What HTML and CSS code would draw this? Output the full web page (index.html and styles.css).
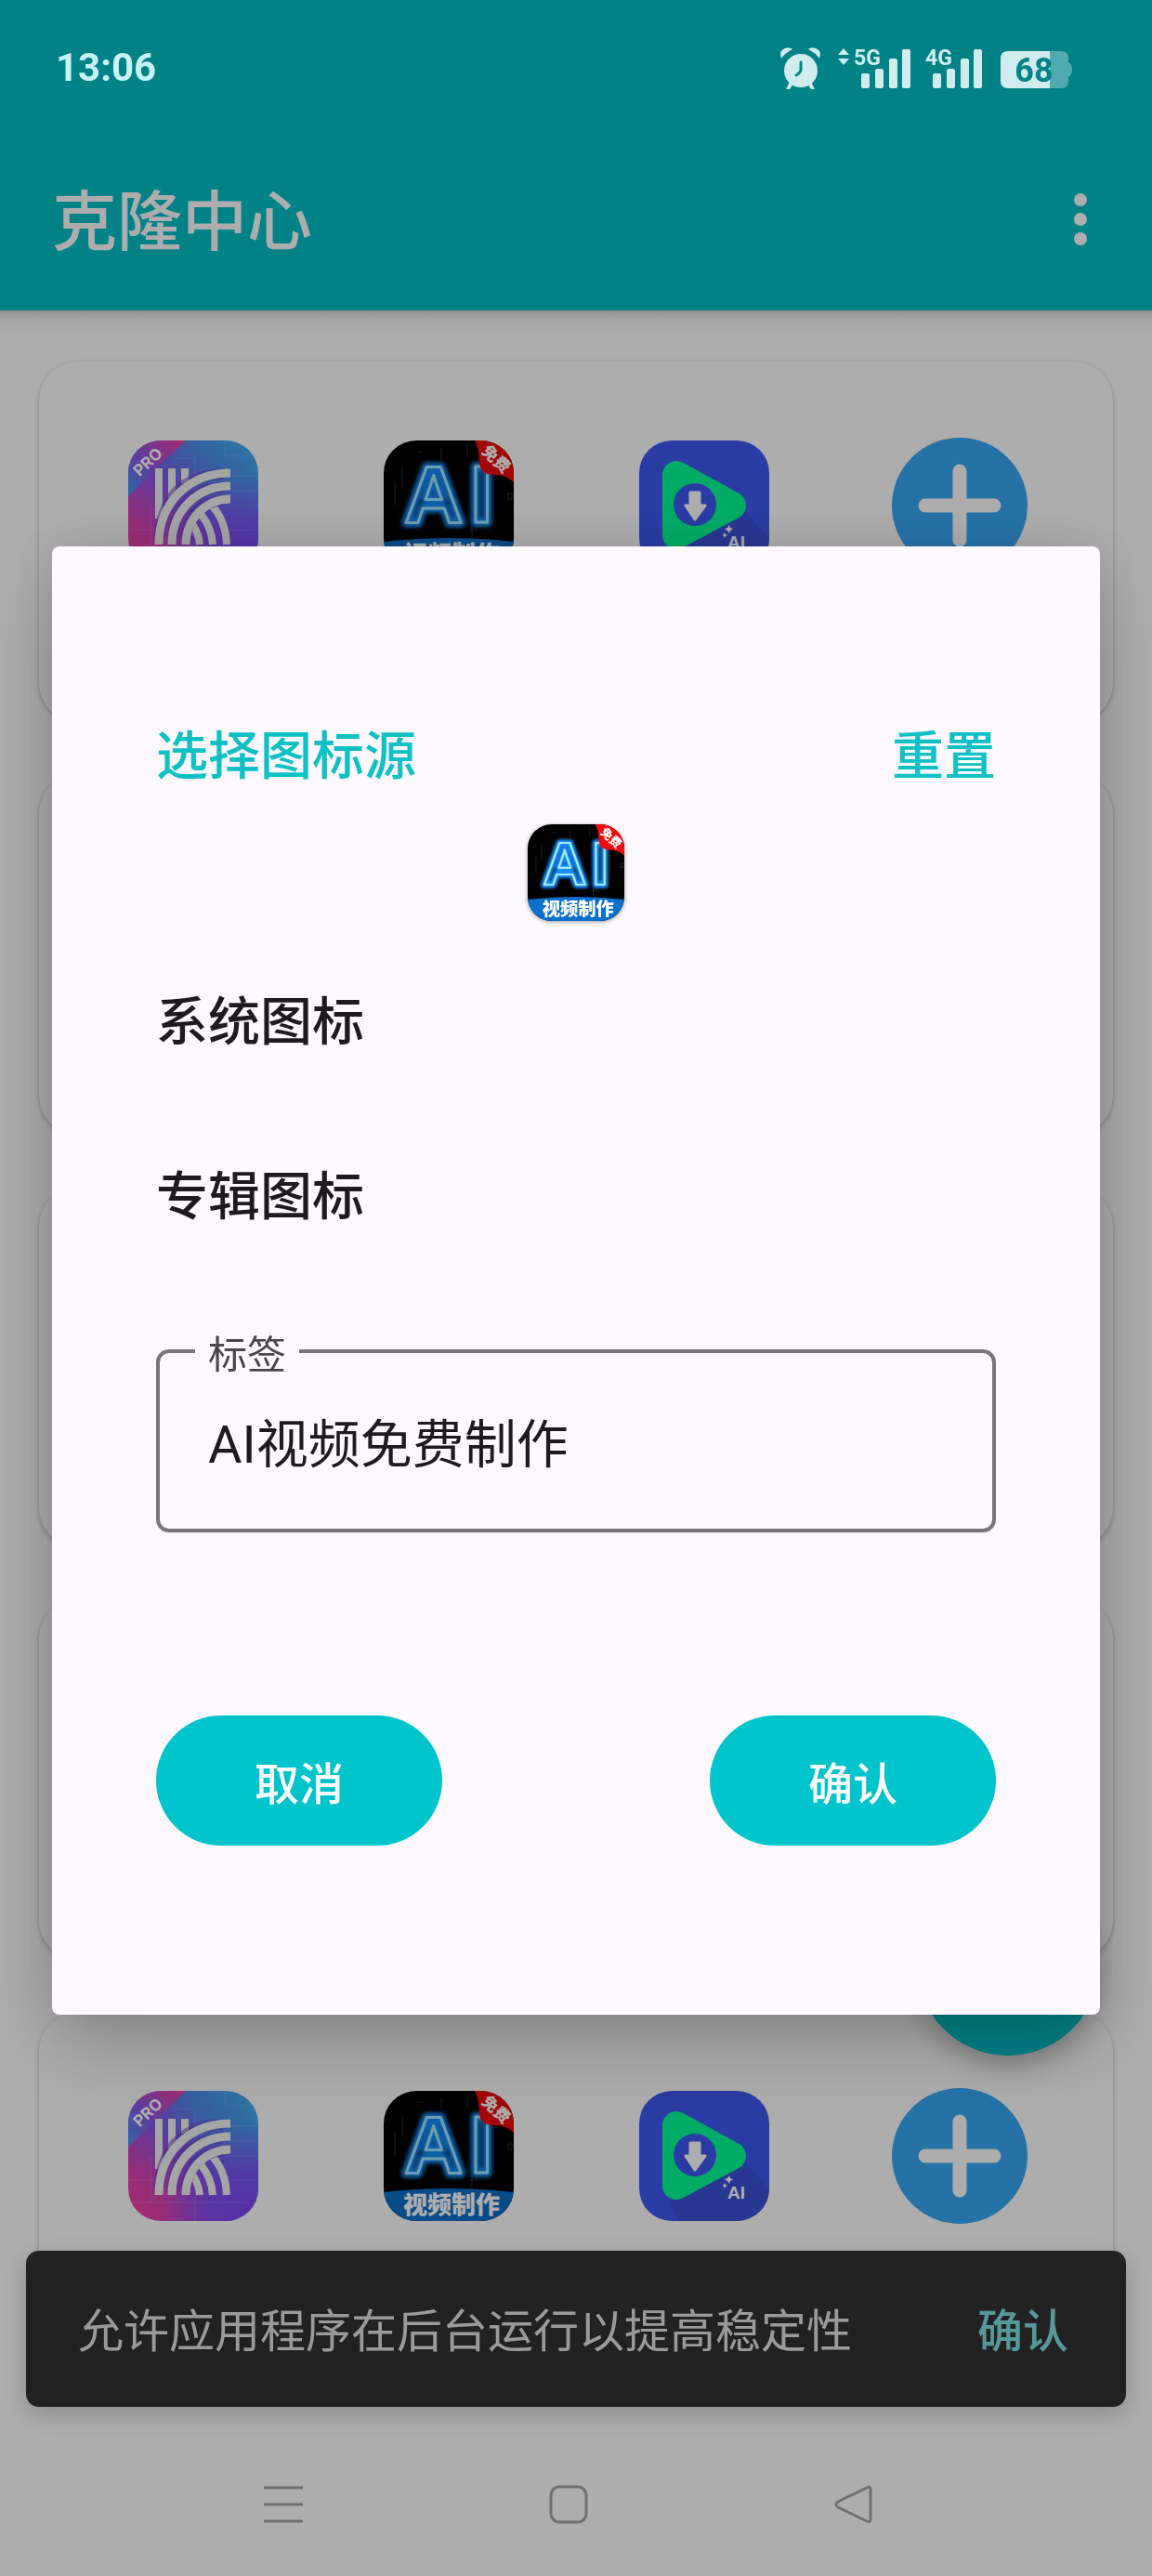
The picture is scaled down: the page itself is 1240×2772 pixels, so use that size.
FILE: index.html
```html
<!DOCTYPE html>
<html lang="zh-CN">
<head>
<meta charset="utf-8">
<meta name="viewport" content="width=device-width, initial-scale=1">
<title>克隆中心</title>
<link rel="stylesheet" href="styles.css">
</head>
<body>
<svg class="sprite" width="0" height="0" aria-hidden="true">
  <defs>
    <linearGradient id="kBase" x1="0" y1="1" x2="1" y2="0">
      <stop offset="0" stop-color="#f83fa0"/>
      <stop offset=".22" stop-color="#d944b4"/>
      <stop offset=".48" stop-color="#8458ec"/>
      <stop offset=".72" stop-color="#4f8cec"/>
      <stop offset="1" stop-color="#3fb6f4"/>
    </linearGradient>
    <radialGradient id="kCorner" cx="1" cy="1" r=".75">
      <stop offset="0" stop-color="#8240fa"/>
      <stop offset=".5" stop-color="#7c4ef6" stop-opacity=".8"/>
      <stop offset="1" stop-color="#7c4ef6" stop-opacity="0"/>
    </radialGradient>
    <linearGradient id="kRibbon" x1="0" y1="1" x2="1" y2="0">
      <stop offset="0" stop-color="#3f9cf8"/>
      <stop offset=".45" stop-color="#8d58e8"/>
      <stop offset="1" stop-color="#f43f9c"/>
    </linearGradient>
    <clipPath id="tile"><rect width="140" height="140" rx="35"/></clipPath>
    <filter id="glow" x="-30%" y="-30%" width="160%" height="160%"><feGaussianBlur stdDeviation="2"/></filter>
    <symbol id="app-k" viewBox="0 0 140 140">
      <g clip-path="url(#tile)">
        <rect width="140" height="140" fill="url(#kBase)"/>
        <rect width="140" height="140" fill="url(#kCorner)"/>
        <g stroke="#fff" stroke-opacity=".12" stroke-width="1" fill="none">
          <path d="M50 19H72V70M104 0V16H140M72 38H140M110 54H140M110 70H140M0 96H28M110 96H140M0 120H140M72 112V140M24 70V120"/>
        </g>
        <path d="M0 0H62L0 60Z" fill="url(#kRibbon)"/>
        <g fill="none" stroke="#f3f3f3" stroke-width="8">
          <path d="M106 112Q105 86 90 70M91 112Q90 94 78 79M77 112Q76 100 69 90"/>
          <path d="M33 30V84M47 30V62M61 30V46"/>
        </g>
        <g fill="none" stroke="#6b45c8" stroke-width="12" stroke-opacity=".55">
          <path d="M33 104Q40 38 102 36M48 104Q52 54 102 50M62 104Q66 68 102 64"/>
        </g>
        <g fill="none" stroke="#f3f3f3" stroke-width="9">
          <path d="M33 112C33 66 66 35 110 35M47 112C47 74 76 49 110 49M62 112C62 84 84 63 110 63"/>
        </g>
        <text x="21" y="29" class="k-pro" text-anchor="middle" transform="rotate(-43 21 23)">PRO</text>
      </g>
    </symbol>
    <symbol id="app-ai" viewBox="0 0 140 140">
      <g clip-path="url(#tile)">
        <rect width="140" height="140" fill="#000"/>
        <path d="M12 44V70M20 28V50M90 4V18M134 57H138V63H134ZM92 96H101M95 90V104M62 8V20M36 12H42" stroke="#1d3540" fill="none"/>
        <g class="neon neon-halo" filter="url(#glow)"><text x="22" y="88">A</text><text x="93" y="88">I</text></g>
        <g class="neon neon-core"><text x="22" y="88">A</text><text x="93" y="88">I</text></g>
        <path d="M0 109Q70 101 140 109V140H0Z" fill="#0b6fcb"/>
        <text x="73" y="132" class="ai-name" text-anchor="middle">视频制作</text>
        <path d="M98 0H140V45Q130 36 118 37Q104 37 103 24Q103 10 98 0Z" fill="#f00a0a"/>
        <text x="121" y="26" class="ai-free" text-anchor="middle" transform="rotate(43 121 20)">免费</text>
      </g>
    </symbol>
    <symbol id="app-video" viewBox="0 0 140 140">
      <g clip-path="url(#tile)">
        <rect width="140" height="140" fill="#4058f2"/>
        <path d="M32 115L114 76L140 106V140H42Z" fill="#3b52d8"/>
        <path d="M40 37L100 70L40 102Z" fill="#00fe96" stroke="#00fe96" stroke-width="30" stroke-linejoin="round"/>
        <circle cx="60" cy="69" r="23" fill="#4058f2"/>
        <path d="M55 56H65V70H71L60 85L50 70H55Z" fill="#fff" stroke="#fff" stroke-width="3" stroke-linejoin="round"/>
        <path d="M97 91L98 94L101 95L98 97L97 100L95 97L92 95L95 94ZM92 99L93 101L95 102L93 103L92 105L91 103L90 102L91 101Z" fill="#fff"/>
        <text x="95" y="116" class="video-ai">AI</text>
      </g>
    </symbol>
    <symbol id="add" viewBox="0 0 146 146">
      <circle cx="73" cy="73" r="73" fill="#38a9f7"/>
      <path d="M73 36V110M36 73H110" stroke="#fff" stroke-width="15" stroke-linecap="round"/>
    </symbol>
  </defs>
</svg>

<div class="status">
  <span class="clock">13:06</span>
  <svg class="status-icons" width="316" height="72" viewBox="838 38 316 72" role="img" aria-label="闹钟 5G 4G 电量 68">
    <g fill="#d0ecec">
      <circle cx="862" cy="76" r="18"/>
      <path d="M841 63Q838 54 845 52Q850 50 853 53Q845 57 841 63ZM882 63Q885 54 878 52Q873 50 870 53Q878 57 882 63ZM850 88L846 96H850L854 90ZM873 88L877 96H873L869 90Z"/>
      <path d="M902 59L908 52L914 59ZM902 63H914L908 70Z"/>
      <rect x="927" y="79" width="9" height="16" rx="2"/><rect x="942" y="74" width="9" height="21" rx="2"/><rect x="957" y="63" width="9" height="32" rx="2"/><rect x="971" y="53" width="9" height="42" rx="2"/>
      <rect x="1004" y="79" width="9" height="16" rx="2"/><rect x="1019" y="74" width="9" height="21" rx="2"/><rect x="1034" y="63" width="9" height="32" rx="2"/><rect x="1048" y="53" width="9" height="42" rx="2"/>
      <text x="919" y="70" class="net">5G</text><text x="996" y="70" class="net">4G</text>
      <path d="M1085 55H1130V95H1085Q1077 95 1077 87V63Q1077 55 1085 55Z"/>
    </g>
    <path d="M862 67V75Q862 78 857 81" fill="none" stroke="#00848a" stroke-width="3" stroke-linecap="round"/>
    <path d="M1130 55H1142Q1150 55 1150 63V67Q1154 69 1154 75Q1154 81 1150 83V87Q1150 95 1142 95H1130Z" fill="#4fabb0"/>
    <text x="1113" y="88" class="level" text-anchor="middle">68</text>
  </svg>
</div>

<header class="toolbar">
  <h1>克隆中心</h1>
  <button class="more" aria-label="更多"><svg width="14" height="56" viewBox="0 0 14 56" fill="#fff"><circle cx="7" cy="7" r="7"/><circle cx="7" cy="28" r="7"/><circle cx="7" cy="49" r="7"/></svg></button>
</header>

<main class="content">
  <section class="card">
    <button class="app" aria-label="K PRO"><svg><use href="#app-k"/></svg></button>
    <button class="app" aria-label="AI"><svg><use href="#app-ai"/></svg></button>
    <button class="app" aria-label="AI"><svg><use href="#app-video"/></svg></button>
    <button class="app add" aria-label="添加"><svg><use href="#add"/></svg></button>
  </section>
  <section class="card"></section>
  <section class="card"></section>
  <section class="card"></section>
  <section class="card">
    <button class="app" aria-label="K PRO"><svg><use href="#app-k"/></svg></button>
    <button class="app" aria-label="AI"><svg><use href="#app-ai"/></svg></button>
    <button class="app" aria-label="AI"><svg><use href="#app-video"/></svg></button>
    <button class="app add" aria-label="添加"><svg><use href="#add"/></svg></button>
  </section>
  <button class="fab" aria-label="新建"></button>
  <div class="snackbar" role="status">
    <span>允许应用程序在后台运行以提高稳定性</span>
    <button class="snack-action">确认</button>
  </div>
</main>

<nav class="system-nav">
  <button aria-label="最近任务"><svg width="42" height="42" viewBox="0 0 42 42"><path d="M0 3H42M0 21H42M0 39H42"/></svg></button>
  <button aria-label="主页"><svg width="42" height="42" viewBox="0 0 42 42"><rect x="2" y="2" width="38" height="38" rx="9"/></svg></button>
  <button aria-label="返回"><svg width="42" height="42" viewBox="0 0 42 42"><path d="M35 3L4 18Q0 21 4 24L35 39Q39 41 39 37V5Q39 1 35 3Z"/></svg></button>
</nav>

<div class="scrim">
  <form class="dialog" role="dialog" aria-modal="true">
    <div class="row">
      <button type="button" class="option accent">选择图标源</button>
      <button type="button" class="option accent">重置</button>
    </div>
    <svg class="preview"><use href="#app-ai"/></svg>
    <button type="button" class="option">系统图标</button>
    <button type="button" class="option">专辑图标</button>
    <fieldset class="field">
      <legend><label for="tag">标签</label></legend>
      <input id="tag" type="text" value="AI视频免费制作">
    </fieldset>
    <div class="row actions">
      <button type="button" class="pill">取消</button>
      <button type="button" class="pill">确认</button>
    </div>
  </form>
</div>
</body>
</html>
```

FILE: styles.css
```css
* { box-sizing: border-box; }

body {
  margin: 0;
  min-height: 100vh;
  display: flex;
  flex-direction: column;
  background: #fff;
  color: #1d1b20;
  font-family: Roboto, "Noto Sans CJK SC", sans-serif;
}

button {
  margin: 0;
  padding: 0;
  border: 0;
  background: none;
  color: inherit;
  font: inherit;
}

svg { display: block; }
.sprite { position: absolute; }

/* Status bar and toolbar */
.status {
  display: flex;
  justify-content: space-between;
  align-items: flex-start;
  height: 138px;
  padding: 38px 86px 0 60px;
  background: #00c0c8;
}
.clock, .status-icons {
  position: relative;
  z-index: 3;
}
.clock {
  color: #c8f2f4;
  font-size: 42px;
  font-weight: 700;
  line-height: 70px;
}
.net { font-size: 23px; font-weight: 700; }
.level { font-size: 36px; font-weight: 700; fill: #00848a; }

.toolbar {
  display: flex;
  justify-content: space-between;
  align-items: center;
  height: 196px;
  padding: 0 70px 0 56px;
  background: #00c0c8;
  color: #fff;
}
h1 {
  margin: 0;
  padding-top: 8px;
  font-size: 70px;
  font-weight: 500;
  line-height: 84px;
}

/* Card list */
.content {
  position: relative;
  flex: 1;
  display: flex;
  flex-direction: column;
  gap: 56px;
  padding: 55px 42px 64px;
  background: linear-gradient(rgba(0, 0, 0, .18), rgba(0, 0, 0, .04) 10px, transparent 24px);
}
.card {
  display: grid;
  grid-template-columns: repeat(4, 1fr);
  justify-items: center;
  align-items: start;
  height: 388px;
  padding: 82px 28px 0;
  border-radius: 42px;
  box-shadow: 0 2px 5px rgba(0, 0, 0, .26);
}
.app {
  display: grid;
  place-items: center;
  height: 146px;
}
.app svg { width: 140px; height: 140px; }
.app.add svg { width: 146px; height: 146px; }

.k-pro { font: 700 17px Inter, sans-serif; fill: #fff; }
.neon { font: 700 88px "Liberation Sans", sans-serif; fill: none; stroke-linejoin: round; }
.neon-halo { stroke: #1690ff; stroke-width: 10px; }
.neon-core { stroke: #a6e8ff; stroke-width: 3px; }
.ai-name { font: 900 26px "Noto Sans CJK SC", sans-serif; fill: #fff; }
.ai-free { font: 900 17px "Noto Sans CJK SC", sans-serif; fill: #fff; }
.video-ai { font: 700 19px "Liberation Sans", sans-serif; fill: #fff; }

.fab {
  position: absolute;
  right: 57px;
  bottom: 406px;
  width: 196px;
  height: 196px;
  border-radius: 50%;
  background: #00c0c8;
  box-shadow: 0 12px 28px rgba(0, 0, 0, .24);
}
.snackbar {
  position: absolute;
  left: 28px;
  right: 28px;
  bottom: 28px;
  display: flex;
  justify-content: space-between;
  align-items: center;
  height: 168px;
  padding: 8px 62px 0 56px;
  border-radius: 14px;
  background: #323232;
  box-shadow: 0 8px 24px rgba(0, 0, 0, .2);
  color: #e4e4e4;
  font-size: 49px;
  line-height: 60px;
}
.snack-action { color: #80e0e0; font-weight: 500; }

/* System navigation */
.system-nav {
  display: flex;
  justify-content: center;
  align-items: center;
  gap: 265px;
  height: 154px;
  padding-right: 16px;
}
.system-nav svg { fill: none; stroke: #a4a4a4; stroke-width: 3px; }

/* Dialog */
.scrim {
  position: fixed;
  inset: 0;
  z-index: 2;
  display: flex;
  flex-direction: column;
  justify-content: center;
  padding: 0 56px 16px;
  background: rgba(0, 0, 0, .32);
}
.dialog {
  display: flex;
  flex-direction: column;
  align-items: flex-start;
  padding: 186px 112px 182px;
  border-radius: 8px;
  background: #fef9ff;
  box-shadow: 0 36px 84px rgba(0, 0, 0, .2), 0 0 56px rgba(0, 0, 0, .1);
}
.row {
  display: flex;
  justify-content: space-between;
  width: 100%;
}
.option {
  font-size: 56px;
  font-weight: 500;
  line-height: 80px;
}
.option + .option { margin-top: 108px; }
.row .option + .option { margin-top: 0; }
.accent { color: #0fc0c4; }
.preview {
  align-self: center;
  width: 104px;
  height: 104px;
  margin: 33px 0 69px;
  filter: drop-shadow(0 1px 2px rgba(0, 0, 0, .4));
}
.field {
  width: 100%;
  margin: 97px 0 0;
  padding: 26px 38px 56px;
  border: 4px solid #79747e;
  border-radius: 14px;
}
.field legend {
  padding: 10px 14px 0;
  color: #49454f;
  font-size: 42px;
  line-height: 48px;
}
.field input {
  display: block;
  width: 100%;
  height: 80px;
  padding: 0 14px;
  border: 0;
  outline: 0;
  background: none;
  color: inherit;
  font: inherit;
  font-size: 56px;
}
.actions { margin-top: 197px; }
.pill {
  width: 308px;
  height: 140px;
  border-radius: 70px;
  background: #00c4cc;
  color: #fff;
  font-size: 48px;
  font-weight: 500;
}
```
